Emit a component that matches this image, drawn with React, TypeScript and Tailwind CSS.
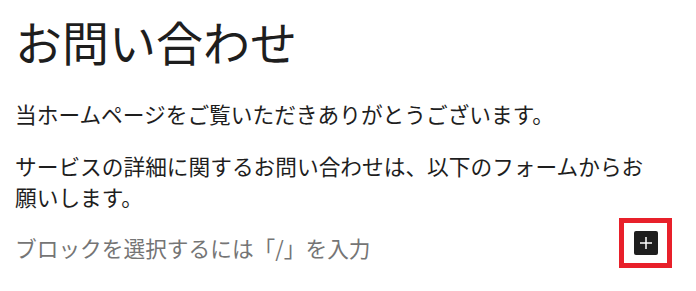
export default function App() {
  return (
    <div
      className="h-[291px] w-[696px] overflow-hidden bg-white pl-[15px] pr-[24px] pt-[13px] text-[#1e1e1e]"
      style={{ fontFamily: '"Noto Sans CJK JP", "Noto Sans", sans-serif' }}
    >
      <h1 className="text-[47px] font-normal leading-[56px]">お問い合わせ</h1>

      <p className="mt-[29px] w-[640px] text-[21.7px] leading-[31.5px]">
        当ホームページをご覧いただきありがとうございます。
      </p>
      <p className="mt-[20px] w-[640px] text-[21.7px] leading-[31.5px]">
        サービスの詳細に関するお問い合わせは、以下のフォームからお願いします。
      </p>

      <div className="mt-[5px] flex items-start justify-between">
        <p className="mt-[14px] text-[21.7px] leading-[31.5px] text-[#757575]">
          ブロックを選択するには「/」を入力
        </p>
        <div className="flex h-[50px] w-[53px] items-center justify-center border-[5px] border-[#e8202a]">
          <button className="flex h-[24px] w-[24px] items-center justify-center rounded-[2px] bg-[#1e1e1e]">
            <svg width="12" height="12" viewBox="0 0 12 12" fill="none">
              <path d="M6 0v12M0 6h12" stroke="white" strokeWidth="1.5" />
            </svg>
          </button>
        </div>
      </div>
    </div>
  );
}
